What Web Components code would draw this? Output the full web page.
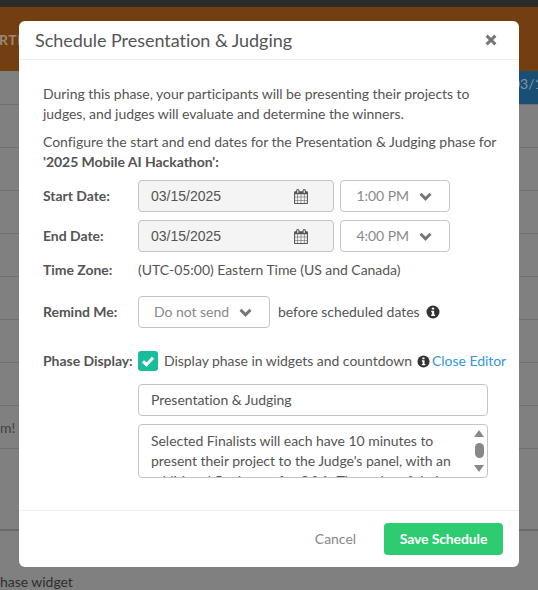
<!DOCTYPE html>
<html lang="en">
<head>
<meta charset="utf-8">
<title>Schedule Presentation &amp; Judging</title>
<style>
html,body{margin:0;padding:0;height:100%;overflow:hidden;background:#808080;}
body{font-family:"Lato","Liberation Sans",sans-serif;font-size:14px;color:#555;letter-spacing:-0.04px;}
</style>
</head>
<body>
<template id="t-page">
<style>
:host{display:block;position:relative;width:538px;height:590px;overflow:hidden;background:#808080;color:#333;font:14px/20px "Lato","Liberation Sans",sans-serif;}
.top{height:7px;background:#2b2b2b;}
.band{height:64px;background:#733f10;box-sizing:border-box;padding-top:23px;color:#9a8877;font-weight:700;white-space:nowrap;}
.band span{display:block;margin-left:-1px;letter-spacing:.5px;}
.head{height:33px;display:flex;justify-content:flex-end;}
.head b{display:block;width:19px;background:#1a4f75;color:#7f97a8;font-weight:400;overflow:hidden;white-space:nowrap;line-height:25px;box-sizing:border-box;text-indent:-7px;}
.row{height:42px;border-top:1px solid #6f6f6f;}
.row.msg{line-height:44px;color:#404040;}
.row.tall{height:80px;}
.row.last{height:59px;border-top:2px solid #6a6a6a;line-height:101px;color:#2e2e2e;}
</style>
<div class="top"></div>
<div class="band"><span>RTI</span></div>
<div class="head"><b>03/15</b></div>
<div class="row"></div><div class="row"></div><div class="row"></div><div class="row"></div>
<div class="row"></div><div class="row"></div><div class="row"></div>
<div class="row msg">m!</div>
<div class="row tall"></div>
<div class="row last">hase widget</div>
<slot></slot>
</template>

<template id="t-modal">
<style>
:host{display:block;position:absolute;left:19px;top:21px;width:500px;background:#fff;border-radius:6px;color:#555;font:14px/20px "Lato","Liberation Sans",sans-serif;}
header{display:flex;align-items:center;justify-content:space-between;height:38px;padding:0 22px 0 16px;border-bottom:1px solid #eee;}
h1{margin:0;font-size:18px;font-weight:400;line-height:38px;color:#555;}
.body{padding:24px 24px 32px;}
footer{display:flex;justify-content:flex-end;align-items:center;gap:28px;height:32px;padding:12px 16px;border-top:1px solid #f0f0f0;}
svg{display:block;}
</style>
<header><h1 id="title"></h1>
<svg width="12" height="12" viewBox="0 0 12 12"><path d="M1.600 1.600L10.400 10.400M10.400 1.600L1.600 10.400" stroke="#777" stroke-width="3" fill="none"/></svg>
</header>
<div class="body"><slot></slot></div>
<footer><slot name="footer"></slot></footer>
</template>

<template id="t-row">
<style>
:host{display:grid;grid-template-columns:95px 1fr;align-items:center;margin-top:8px;}
.l{font-weight:700;color:#555;white-space:nowrap;}
.c{display:flex;align-items:center;gap:6px;min-height:20px;white-space:nowrap;}
</style>
<div class="l" id="l"></div><div class="c"><slot></slot></div>
</template>

<template id="t-date">
<style>
:host{display:flex;align-items:center;justify-content:space-between;box-sizing:border-box;width:196px;height:32px;padding:0 25px 0 12px;background:#f4f4f4;border:1px solid #c4c4c4;border-radius:4px;color:#555;font:14px/20px "Liberation Sans",sans-serif;letter-spacing:0;}
svg{display:block;}
</style>
<slot></slot>
<svg width="14" height="15" viewBox="0 0 1664 1792"><path fill="#555" d="M128 1664h288v-288h-288v288zm352 0h320v-288h-320v288zm-352-352h288v-320h-288v320zm352 0h320v-320h-320v320zm-352-384h288v-288h-288v288zm736 736h320v-288h-320v288zm-384-736h320v-288h-320v288zm768 736h288v-288h-288v288zm-384-352h320v-320h-320v320zm-352-864v-288q0-13-9.500-22.500t-22.500-9.500h-64q-13 0-22.500 9.500t-9.500 22.500v288q0 13 9.500 22.500t22.500 9.500h64q13 0 22.500-9.500t9.500-22.500zm736 864h288v-320h-288v320zm-384-384h320v-288h-320v288zm384 0h288v-288h-288v288zm32-480v-288q0-13-9.500-22.500t-22.500-9.500h-64q-13 0-22.500 9.500t-9.500 22.500v288q0 13 9.500 22.500t22.500 9.500h64q13 0 22.500-9.500t9.500-22.500zm384-64v1280q0 52-38 90t-90 38h-1408q-52 0-90-38t-38-90v-1280q0-52 38-90t90-38h128v-96q0-66 47-113t113-47h64q66 0 113 47t47 113v96h384v-96q0-66 47-113t113-47h64q66 0 113 47t47 113v96h128q52 0 90 38t38 90z"/></svg>
</template>

<template id="t-select">
<style>
:host{display:flex;align-items:center;justify-content:flex-end;gap:10px;box-sizing:border-box;height:32px;padding:0 17px 0 0;background:#fff;border:1px solid #c4c4c4;border-radius:4px;color:#888;font:14px/20px "Lato",sans-serif;}
svg{display:block;}
</style>
<slot></slot>
<svg width="13" height="9" viewBox="0 0 13 9"><path d="M1.500 1.800L6.500 6.800L11.500 1.800" fill="none" stroke="#777" stroke-width="3"/></svg>
</template>

<template id="t-info">
<style>:host{display:inline-block;width:14px;height:14px;flex:none;}:host([small]){width:13px;height:13px;margin-left:-1px;}svg{display:block;width:100%;height:100%;}</style>
<svg viewBox="0 0 14 14"><circle cx="7" cy="7" r="6.500" fill="#333"/><path fill="#fff" d="M5.800 2.700h2.300v1.800H5.800zM5.300 5.700h2.800v3.900h.9v1.500H5.200V9.600h.9V7.200h-.8z"/></svg>
</template>

<template id="t-check">
<style>:host{display:inline-block;width:20px;height:20px;flex:none;background:#1abc9c;border-radius:3px;}svg{display:block;}</style>
<svg width="20" height="20" viewBox="0 0 20 20"><path d="M5 10.300L8.500 13.700L15 6.800" fill="none" stroke="#fff" stroke-width="3"/></svg>
</template>

<template id="t-text">
<style>
:host{display:flex;box-sizing:border-box;width:350px;height:32px;margin:13px 0 0 95px;padding:0 12px;align-items:center;border:1px solid #c4c4c4;border-radius:4px;color:#555;background:#fff;}
</style>
<slot></slot>
</template>

<template id="t-area">
<style>
:host{display:flex;box-sizing:border-box;width:350px;height:54px;margin:8px 0 0 95px;border:1px solid #c4c4c4;border-radius:4px;overflow:hidden;background:#fff;color:#555;}
.t{flex:1;min-width:0;padding:6px 12px 0 12px;}
.s{flex:none;width:10px;display:flex;flex-direction:column;align-items:center;padding-top:5px;box-sizing:border-box;margin-right:3px;}
svg{display:block;flex:none;}
.th{flex:none;width:9px;height:15px;border-radius:5px;background:#888;margin:6px 0 7px;}
</style>
<div class="t"><slot></slot></div>
<div class="s">
<svg width="10" height="7" viewBox="0 0 10 7"><path fill="#888" d="M5 0L10 7H0z"/></svg>
<div class="th"></div>
<svg width="10" height="7" viewBox="0 0 10 7"><path fill="#888" d="M0 0H10L5 7z"/></svg>
</div>
</template>

<template id="t-save">
<style>
:host{display:flex;align-items:center;justify-content:center;width:119px;height:32px;background:#2ecc71;border-radius:4px;color:#fff;font:700 14px/20px "Lato",sans-serif;letter-spacing:-0.12px;}
</style>
<slot></slot>
</template>

<template id="t-cancel">
<style>:host{display:block;color:#888;font:14px/20px "Lato",sans-serif;}</style>
<slot></slot>
</template>

<script>
function def(name, tpl, extra){
  customElements.define(name, class extends HTMLElement{
    constructor(){
      super();
      this.attachShadow({mode:'open'}).appendChild(document.getElementById(tpl).content.cloneNode(true));
    }
    connectedCallback(){ if(extra) extra(this); }
  });
}
def('hack-page','t-page');
def('modal-dialog','t-modal',function(el){el.shadowRoot.getElementById('title').textContent=el.getAttribute('heading');});
def('form-row','t-row',function(el){el.shadowRoot.getElementById('l').textContent=el.getAttribute('label');});
def('date-field','t-date');
def('select-field','t-select',function(el){el.style.width=el.getAttribute('w')+'px';});
def('info-icon','t-info');
def('check-box','t-check');
def('text-field','t-text');
def('area-field','t-area');
def('save-button','t-save');
def('cancel-link','t-cancel');
</script>

<hack-page>
  <modal-dialog heading="Schedule Presentation &amp; Judging">
    <div style="margin-bottom:8px">During this phase, your participants will be presenting their projects to judges, and judges will evaluate and determine the winners.</div>
    <div style="white-space:nowrap">Configure the start and end dates for the Presentation &amp; Judging phase for<br><b>'2025 Mobile AI Hackathon':</b></div>
    <form-row label="Start Date:"><date-field>03/15/2025</date-field><select-field w="110">1:00 PM</select-field></form-row>
    <form-row label="End Date:"><date-field>03/15/2025</date-field><select-field w="110">4:00 PM</select-field></form-row>
    <form-row label="Time Zone:">(UTC-05:00) Eastern Time (US and Canada)</form-row>
    <form-row label="Remind Me:" style="margin-top:16px"><select-field w="132">Do not send</select-field><span style="margin-left:2px">before scheduled dates</span><info-icon></info-icon></form-row>
    <form-row label="Phase Display:" style="margin-top:23px"><check-box></check-box><span>Display phase in widgets and countdown</span><info-icon small></info-icon><span style="color:#3498db;margin-left:-4px">Close Editor</span></form-row>
    <text-field>Presentation &amp; Judging</text-field>
    <area-field>Selected Finalists will each have 10 minutes to present their project to the Judge's panel, with an additional 5 minutes for Q&amp;A. The order of their</area-field>
    <cancel-link slot="footer">Cancel</cancel-link>
    <save-button slot="footer">Save Schedule</save-button>
  </modal-dialog>
</hack-page>
</body>
</html>
